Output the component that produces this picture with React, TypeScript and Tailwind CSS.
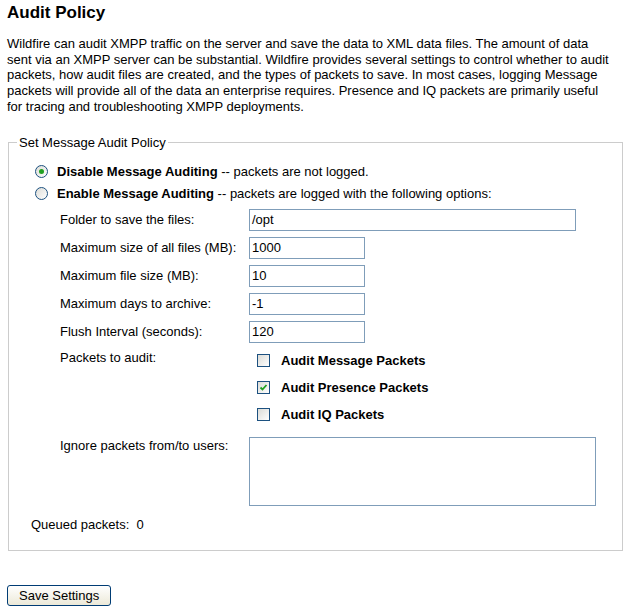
import React from "react";

const Radio = ({ checked }: { checked?: boolean }) => (
	<span className="inline-flex h-[13px] w-[13px] shrink-0 items-center justify-center rounded-full border border-[#1c5180] bg-gradient-to-br from-[#dcdcd7] to-white">
		{checked && <span className="h-[5px] w-[5px] rounded-full bg-[#21a121]" />}
	</span>
);

const Checkbox = ({ checked }: { checked?: boolean }) => (
	<span className="inline-flex h-[13px] w-[13px] shrink-0 items-center justify-center border border-[#1c5180] bg-gradient-to-br from-[#dcdcd7] to-white">
		{checked && (
			<svg width="9" height="9" viewBox="0 0 9 9">
				<path d="M1.5 4.5 L3.5 6.5 L7.5 2" stroke="#21a121" strokeWidth="1.8" fill="none" />
			</svg>
		)}
	</span>
);

const FieldRow = ({ label, value, wide }: { label: string; value: string; wide?: boolean }) => (
	<div className="flex items-center">
		<div className="w-[189px]">{label}</div>
		<div
			className={
				"flex h-[22px] items-center border border-[#7f9db9] bg-white px-[2px] " +
				(wide ? "w-[327px]" : "w-[116px]")
			}
		>
			{value}
		</div>
	</div>
);

const packets = [
	{ label: "Audit Message Packets", checked: false },
	{ label: "Audit Presence Packets", checked: true },
	{ label: "Audit IQ Packets", checked: false }
];

export default function App() {
	return (
		<div
			className="min-h-[615px] w-[623px] bg-white px-[7px] text-[13px] leading-[15px] text-black"
			style={{ fontFamily: '"Liberation Sans", Arial, sans-serif' }}
		>
			<h1 className="pt-[3px] text-[17px] font-bold leading-[20px]">Audit Policy</h1>

			<p className="mt-[13px] leading-[15.7px]">
				Wildfire can audit XMPP traffic on the server and save the data to XML data files. The amount of data
				sent via an XMPP server can be substantial. Wildfire provides several settings to control whether to audit
				packets, how audit files are created, and the types of packets to save. In most cases, logging Message
				packets will provide all of the data an enterprise requires. Presence and IQ packets are primarily useful
				for tracing and troubleshooting XMPP deployments.
			</p>

			<fieldset className="mt-[20px] ml-[1px] w-[604px] border border-[#cccccc] px-[26px] pb-[18px]">
				<legend className="ml-[-18px] px-[2px] leading-[15px]">Set Message Audit Policy</legend>

				<div className="mt-[14px] flex items-center gap-[9px]">
					<Radio checked />
					<span>
						<b>Disable Message Auditing</b> -- packets are not logged.
					</span>
				</div>
				<div className="mt-[7px] flex items-center gap-[9px]">
					<Radio />
					<span>
						<b>Enable Message Auditing</b> -- packets are logged with the following options:
					</span>
				</div>

				<div className="ml-[25px] mt-[8px] flex flex-col gap-[6px]">
					<FieldRow label="Folder to save the files:" value="/opt" wide />
					<FieldRow label="Maximum size of all files (MB):" value="1000" />
					<FieldRow label="Maximum file size (MB):" value="10" />
					<FieldRow label="Maximum days to archive:" value="-1" />
					<FieldRow label="Flush Interval (seconds):" value="120" />

					<div className="mt-[1px] flex">
						<div className="w-[197px]">Packets to audit:</div>
						<div className="flex flex-col gap-[12px] pt-[3px]">
							{packets.map((p) => (
								<div key={p.label} className="flex items-center gap-[11px]">
									<Checkbox checked={p.checked} />
									<b>{p.label}</b>
								</div>
							))}
						</div>
					</div>

					<div className="mt-[9px] flex">
						<div className="w-[189px] pt-[1px]">Ignore packets from/to users:</div>
						<div className="h-[69px] w-[347px] border border-[#7f9db9] bg-white" />
					</div>
				</div>

				<div className="ml-[-4px] mt-[11px]">Queued packets:&nbsp; 0</div>
			</fieldset>

			<button className="mt-[34px] h-[21px] rounded-[3px] border border-[#003c74] bg-gradient-to-b from-white to-[#ece9d8] px-[11px] text-[13px] leading-[19px]">
				Save Settings
			</button>
		</div>
	);
}
